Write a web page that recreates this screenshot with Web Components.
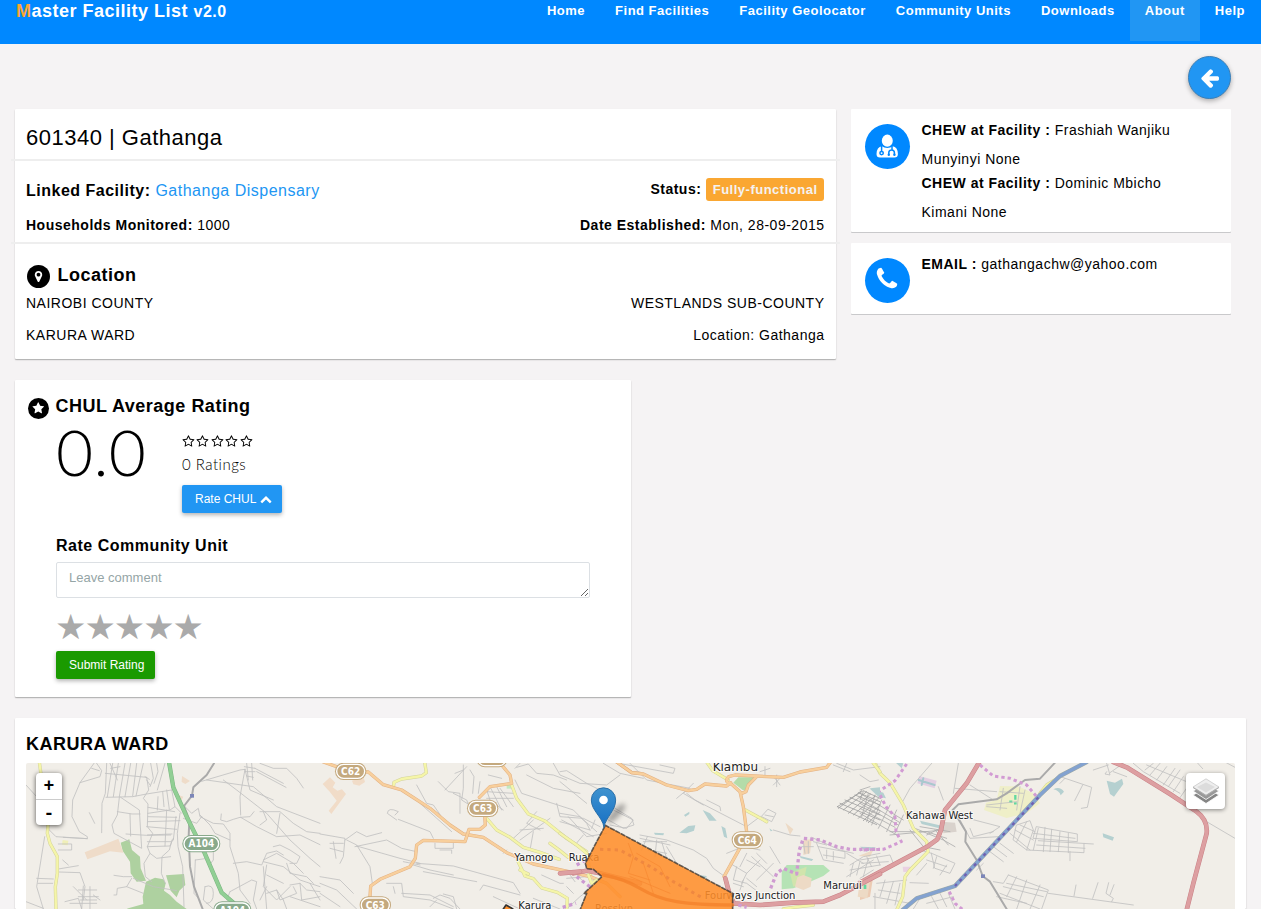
<!DOCTYPE html>
<html lang="en">
<head>
<meta charset="utf-8">
<title>Master Facility List</title>
<style>
html,body{margin:0;height:100%}
body{background:#f5f3f4;font:14px/20px "Liberation Sans",Arial,sans-serif;letter-spacing:.5px;color:#000;overflow:hidden}
</style>
</head>
<body>
<mfl-app></mfl-app>
<script>
const define = (name, html, setup) => customElements.define(name, class extends HTMLElement {
  constructor() {
    super();
    const t = document.createElement('template');
    t.innerHTML = html;
    this.attachShadow({mode: 'open'}).appendChild(t.content.cloneNode(true));
  }
  connectedCallback() { if (setup) setup(this, this.shadowRoot); }
});

const STAR = 'M1728 647q0 22-26 48l-363 354 86 500q1 7 1 20 0 50-41 50-19 0-40-12l-449-236-449 236q-22 12-40 12-21 0-31.5-14.5t-10.5-35.5q0-6 2-20l86-500-364-354q-25-27-25-48 0-37 56-46l502-73 225-455q19-41 49-41t49 41l225 455 502 73q56 9 56 46z';
const ICONS = {
  back: 'M1664 896v128q0 53-32.5 90.5t-84.5 37.5h-704l293 294q38 36 38 90t-38 90l-75 76q-37 37-90 37-52 0-91-37l-651-652q-37-37-37-90 0-52 37-91l651-650q38-38 91-38 52 0 90 38l75 74q38 38 38 91t-38 91l-293 293h704q52 0 84.5 37.5t32.5 90.5z',
  phone: 'M1600 1240q0 27-10 70.5t-21 68.5q-21 50-122 106-94 51-186 51-27 0-52.5-3.5t-57.5-12.5-47.5-14.5-55.5-20.5-49-18q-98-35-175-83-128-79-264.5-215.5t-215.5-264.5q-48-77-83-175-3-9-18-49t-20.5-55.5-14.5-47.5-12.5-57.5-3.5-52.5q0-92 51-186 56-101 106-122 25-11 68.5-21t70.5-10q14 0 21 3 18 6 53 76 11 19 30 54t35 63.5 31 53.5q3 4 17.5 25t21.5 35.5 7 28.5q0 20-28.5 50t-62 55-62 53-28.5 46q0 9 5 22.5t8.5 20.5 14 24 11.5 19q76 137 174 235t235 174q2 1 19 11.5t24 14 20.5 8.5 22.5 5q18 0 46-28.5t53-62 55-62 50-28.5q14 0 28.5 7t35.5 21.5 25 17.5q25 15 53.5 31t63.5 35 54 30q70 35 76 53 3 7 3 21z',
  up: 'M1683 1331l-166 165q-19 19-45 19t-45-19l-531-531-531 531q-19 19-45 19t-45-19l-166-165q-19-19-19-45.5t19-45.5l742-741q19-19 45-19t45 19l742 741q19 19 19 45.5t-19 45.5z',
  star: STAR,
  'star-o': 'M1201 1004l306-297-422-62-189-382-189 382-422 62 306 297-73 421 378-199 377 199zm527-357q0 22-26 48l-363 354 86 500q1 7 1 20 0 50-41 50-19 0-40-12l-449-236-449 236q-22 12-40 12-21 0-31.5-14.5t-10.5-35.5q0-6 2-20l86-500-364-354q-25-27-25-48 0-37 56-46l502-73 225-455q19-41 49-41t49 41l225 455 502 73q56 9 56 46z',
  marker: 'M1152 640q0-106-75-181t-181-75-181 75-75 181 75 181 181 75 181-75 75-181zm256 0q0 109-33 179l-364 774q-16 33-47.5 52t-67.5 19-67.5-19-46.5-52l-365-774q-33-70-33-179 0-212 150-362t362-150 362 150 150 362z'
};
define('mfl-icon', `<style>:host{display:inline-block;width:1em;height:1em;line-height:0}svg{width:100%;height:100%;fill:currentColor;overflow:visible}</style><svg viewBox="0 0 1792 1792"></svg>`, (el, root) => {
  const svg = root.querySelector('svg'), n = el.getAttribute('name');
  if (n === 'doctor') {
    svg.setAttribute('viewBox', '-1 -1 26 26');
    svg.innerHTML = '<ellipse cx="12.300" cy="6.700" rx="5.500" ry="6.100"/><path d="M7 12.200Q1.700 12.800 1.500 20 1.500 23.600 5 23.600H19.400Q22.900 23.600 22.900 20 22.700 12.800 17.600 12.200 15.600 14 12.300 14 9 14 7 12.200Z"/><g fill="none" stroke="#08f" stroke-width="1.500"><path d="M6.600 11.800V17.400M13.800 20.800V18.800Q13.800 16 16.600 16 19.400 16 19.400 18.800V20.800M17 16V12"/><circle cx="6.600" cy="19.100" r="1.700"/></g><g fill="#08f"><circle cx="13.800" cy="20.700" r="1.200"/><circle cx="19.400" cy="20.700" r="1.200"/></g>';
  } else svg.innerHTML = `<path d="${ICONS[n]}"/>`;
});

define('mfl-disc', `<style>:host{display:flex;align-items:center;justify-content:center;flex:none;border-radius:50%;box-sizing:border-box;color:#fff;background:var(--disc,#000);width:var(--size);height:var(--size);font-size:var(--glyph)}</style><slot></slot>`);

define('mfl-nav-item', `<style>:host{display:block;padding:0 15px;height:41px;line-height:22px;font-weight:700;font-size:13px;color:#fff;box-sizing:border-box;white-space:nowrap}:host([active]){background:#2196f3}</style><slot></slot>`);

define('mfl-header', `<style>:host{display:flex;justify-content:space-between;height:44px;background:#08f;color:#fff}
.brand{font-size:18px;font-weight:700;line-height:22px;padding-left:16px}.brand span{color:#faa732}small{font-size:16px}nav{display:flex;padding-right:1px}</style>
<div class="brand"><span>M</span>aster Facility List <small>v2.0</small></div><nav><slot></slot></nav>`);

define('mfl-card', `<style>:host{display:block;background:#fff;box-sizing:border-box;box-shadow:0 1px 1px rgba(0,0,0,.2),0 1px 2px rgba(0,0,0,.12);border-radius:1px}:host([flat]){box-shadow:0 1px 0 #c9c9cb}</style><slot></slot>`);

define('mfl-unit', `<style>
:host{display:block}
mfl-card{height:250px;padding:0 11px;overflow:visible}
h1{margin:0;height:50px;font-size:22px;font-weight:400;line-height:57px}
hr{border:0;height:2px;margin:0 -15px;background:#eee}
.row{display:flex;justify-content:space-between;padding-right:.5px}
a{color:#2196f3}
.main{height:58px;line-height:56px;font-size:14px;padding-right:1px}.main>div:first-child{font-size:16px;line-height:60px}
.tag{display:inline-block;background:#faa732;color:#f4f2f2;font-weight:700;font-size:13px;line-height:23px;height:23px;padding:0 6.5px 0 7px;border-radius:3px}
.sub{height:23px;line-height:12px}
h2{display:flex;margin:0;height:43px;font-size:18px;line-height:20px;box-sizing:border-box;padding:21px 0 0 1px;gap:7.500px}
mfl-disc{--size:23px;--glyph:13px}
.loc{height:32px;line-height:32px}
</style>
<mfl-card><h1>601340 | Gathanga</h1><hr>
<div class="row main"><div><b>Linked Facility:</b> <a>Gathanga Dispensary</a></div><div><b>Status:</b> <span class="tag">Fully-functional</span></div></div>
<div class="row sub"><div><b>Households Monitored:</b> 1000</div><div><b>Date Established:</b> Mon, 28-09-2015</div></div><hr>
<h2><mfl-disc><mfl-icon name="marker"></mfl-icon></mfl-disc><span>Location</span></h2>
<div class="row loc"><div>NAIROBI COUNTY</div><div>WESTLANDS SUB-COUNTY</div></div>
<div class="row loc"><div>KARURA WARD</div><div>Location: Gathanga</div></div>
</mfl-card>`);

define('mfl-contact', `<style>
:host{display:block}
mfl-card{display:flex;padding:7px 14px 10px;gap:11.5px;min-height:71px}
mfl-disc{--disc:#08f;--size:45px;--glyph:26px;margin-top:8px;padding:0 1px 2px 0}
.lines{line-height:29px}
::slotted(div){margin-bottom:-5px}
</style><mfl-card flat><mfl-disc><mfl-icon></mfl-icon></mfl-disc><div class="lines"><slot></slot></div></mfl-card>`, (el, r) => {
  const i = document.createElement('mfl-icon'); i.setAttribute('name', el.getAttribute('icon'));
  r.querySelector('mfl-icon').replaceWith(i);
});

define('mfl-button', `<style>:host{display:inline-flex;align-items:center;box-sizing:border-box;height:28px;padding:0 10px 0 13px;border-radius:2px;background:var(--bg,#2196f3);color:#fff;font-size:12px;letter-spacing:0;gap:4px;box-shadow:0 2px 4px rgba(0,0,0,.3)}</style><slot></slot>`);

define('mfl-rating', `<style>
:host{display:block;width:616px}
mfl-card{height:317px;padding:0 41px 0 12.5px}
h2{display:flex;margin:0;padding-top:16px;gap:7px;font-size:18px;line-height:20px}
mfl-disc{--size:21px;--glyph:12.500px;margin-top:1.5px}
.body{padding-left:28.5px}
.score{display:flex;height:111px}
.num{width:126px;font:300 64px/66px Lato,sans-serif;letter-spacing:.3px}
.stars{display:flex;gap:1.500px;font-size:12.900px;padding-top:16px;height:13px}
.count{font:300 15px/20px Lato,sans-serif;letter-spacing:.5px;padding:6px 0 11px}
h3{margin:0;font-size:16px;line-height:20px;padding-top:6px}
textarea{display:block;box-sizing:border-box;width:534px;height:36px;margin:6px 0 0;padding:5px 12px;border:1px solid #dce0e4;border-radius:2px;font:13px/20px "Liberation Sans",sans-serif;resize:both}
textarea::placeholder{color:#95a5a6}
.big{font:35px/40px "DejaVu Sans",sans-serif;letter-spacing:-2px;color:#aaa;height:40px;margin:9px 0 4px -1px}
mfl-button.go{--bg:#1a9a00;padding-right:10.500px}
</style>
<mfl-card><h2><mfl-disc><mfl-icon name="star"></mfl-icon></mfl-disc><span>CHUL Average Rating</span></h2>
<div class="body"><div class="score"><div class="num">0.0</div><div><div class="stars"><mfl-icon name="star-o"></mfl-icon><mfl-icon name="star-o"></mfl-icon><mfl-icon name="star-o"></mfl-icon><mfl-icon name="star-o"></mfl-icon><mfl-icon name="star-o"></mfl-icon></div><div class="count">0 Ratings</div><mfl-button>Rate CHUL <mfl-icon name="up"></mfl-icon></mfl-button></div></div>
<h3>Rate Community Unit</h3><textarea placeholder="Leave comment"></textarea>
<div class="big">★★★★★</div><mfl-button class="go">Submit Rating</mfl-button></div></mfl-card>`);

const shield = (x, y, w, t, c) => `<g><rect x="${x - w / 2}" y="${y - 26}" width="${w}" height="52" rx="26" fill="${c}"/><rect x="${x - w / 2 + 5}" y="${y - 21}" width="${w - 10}" height="42" rx="21" fill="${c}" stroke="#fff" stroke-width="4"/>${t ? `<text x="${x}" y="${y + 11}" text-anchor="middle" font-weight="700" font-stretch="condensed" font-size="30" fill="#fff">${t}</text>` : ''}</g>`;
const label = (x, y, t, s = 30) => `<text x="${x}" y="${y}" font-size="${s}" fill="#222" stroke="#fff" stroke-opacity=".75" stroke-width="6" paint-order="stroke" stroke-linejoin="round">${t}</text>`;
const road = (d, w, edge, fill) => `<path d="${d}" stroke="${edge}" stroke-width="${w}"/><path d="${d}" stroke="${fill}" stroke-width="${w - 3}"/>`;
const orange = d => road(d, 10, '#e2b184', '#f8cf9c');
const yellow = d => road(d, 10, '#d3d39c', '#f5f5a8');
const red = d => road(d, 14, '#c98287', '#dd9fa1');

define('mfl-map', `<style>
:host{display:grid;height:146px;background:#f1eee8;overflow:hidden;border-radius:2px 2px 0 0}
svg.base,.controls{grid-area:1/1}
svg.base{width:1209px;height:146px;display:block;font-family:"DejaVu Sans",sans-serif;letter-spacing:0}
.controls{display:flex;justify-content:space-between;align-items:flex-start;padding:9px 10px 0 10px;z-index:1}
.zoom,.layers{background:#fff;border-radius:4px;box-shadow:0 1px 5px rgba(0,0,0,.65)}
.zoom{width:26px;margin-top:1px}.zoom div{box-sizing:border-box;height:26px;text-align:center;font:700 18px/26px "Liberation Mono",monospace;letter-spacing:0}
.zoom div+div{border-top:1px solid #ccc;line-height:28px}
.layers{width:39px;height:36px;margin-top:1px;display:flex;align-items:center;justify-content:center;box-shadow:0 1px 4px rgba(0,0,0,.45)}
</style>
<svg class="base" viewBox="26 763 1209 146"><g fill="none" stroke-linejoin="round" stroke-linecap="round">
<g transform="translate(0 700) scale(.33333)">
 <g fill="#aed1a0"><path d="M362 428L388 418 396 450 420 470 422 505 438 542 410 545 392 520 390 485 368 452Z"/><path d="M438 545L465 533 490 538 497 550 492 572 510 585 530 605 560 627H380L385 625 430 612 428 590Z"/><path d="M498 526L552 522 556 555 538 572 530 592 512 572Z"/></g>
 <g fill="#efdcc9"><path d="M254 457L355 416 370 458 330 454 262 478Z"/><path d="M546 228L570 243 556 252 545 246ZM535 285L550 290 545 300 533 296Z"/></g>
 <path d="M188 420L205 422 203 436 186 434Z" fill="#f0efb8"/>
 <g stroke="#c1c1c0" stroke-width="2.5">
 <path d="M282 190L240 248 218 300 216 350 238 395 262 410 262 416 190 412M240 248L300 230 305 212 290 190M275 205L298 212M320 190L316 280 306 310 305 398M318 292L398 290 440 282 515 270M338 190L322 290M355 190L340 290M375 190L358 290M392 190L375 290M410 190L398 288M430 190L408 288M316 220L440 232M332 205L360 200M330 190L352 240M268 338L284 370"/>
 <path d="M358 292L352 345 336 375 342 400 425 445 418 330 362 292M352 335L396 342 420 342M390 342L392 408M440 232L446 270 430 295 444 312 442 380 458 400 442 440 450 460 432 490 436 530 455 545M440 240L450 255M435 230L448 238M452 190L460 235 450 260M470 190L474 215 462 250M495 190L472 270M515 270L525 320 510 330 444 340M488 275L492 320M500 270L508 328M474 290L472 330M444 350L530 352M444 365L540 362M440 380L530 388M442 405L516 402M442 425L512 425M442 440L510 438 520 415M525 320L545 340M444 322L524 335M500 330L495 438M528 350L520 420M378 402L440 406 512 405"/>
 <path d="M516 420L508 450 486 470 484 520 496 550M540 340L532 400 534 440 548 500 552 620M450 460L470 475 512 470M550 315L575 340 595 325 600 350 640 370 670 372 690 400 690 440 715 520 720 570 750 610M600 345L630 375 645 400 690 420M550 355L590 370 605 350M640 420L640 480 625 500M586 480L582 580 600 600M586 480L615 476M615 560L610 600 640 627M690 575L755 540 770 545 760 600 770 627M615 560Q640 550 640 580T620 610M690 575L680 600 720 610"/>
 <path d="M605 244L720 210 735 208M620 240L690 250 760 260 830 320 960 370M670 240L710 270 800 340 870 420 930 475 960 500M735 208L720 290 722 345M664 342L662 360 680 365 700 358 720 352 750 350 762 335M722 352L770 380 830 410 900 405 960 434M740 190L745 240M755 190L758 240M733 200L765 205M735 215L765 215M740 228L760 232M765 205L850 250M780 190L820 205 860 205 890 235 910 264M770 215L858 262M735 208L750 270 820 300"/>
 <path d="M700 490L740 485 785 495 800 460 830 453 850 465M790 480L830 460 880 490 910 520M790 485L850 500 900 540 960 560M800 495L790 560 830 600 870 560M860 490L870 520 920 530 940 550M800 560L780 600M870 555L900 550 920 570 960 575M820 440L840 435 870 450 900 470 890 490 870 490M840 340L830 400M790 335L800 360 780 375M780 335L840 335 880 370 920 395 960 400"/>
 <path d="M78 255L110 290M134 410L114 535 110 560 130 627M110 535L160 537M114 550L158 550M146 388L168 410 262 416M175 450H215V432H175M175 507L235 497M178 516L240 518 255 560 250 600M188 480L205 495M235 570H290M235 590H295M250 558L245 627M270 560V627M240 600H290M280 585L300 600M78 605L130 625M342 526L370 530 395 530M395 535L380 560 352 565 350 585 342 585M380 560L430 580M400 535L460 560 530 572M195 605L235 595 245 627M210 610H290M220 560L260 600"/>
 <path d="M790 500L800 627M800 525L850 550M830 570L840 600 890 580 880 560M900 550L905 600 960 590M800 580L830 570 850 600M850 600L860 627M870 590L960 620M930 550L960 600"/>
 </g>
 <g stroke="#aaa"><path d="M642 190L620 225 580 262 576 287 552 318 568 360 566 410 570 500 582 560 608 627" stroke-width="6"/></g>
 ${yellow('M118 186L124 230 140 300 146 350 142 400 150 430 172 470 172 520 166 560 168 627')}
 ${road('M507 186L520 262 560 350 612 455 665 578 700 608 720 640', 13, '#7db582', '#91cf94')}
 <rect x="570" y="282" width="12" height="11" fill="#7c86b8"/>
 ${shield(604, 431, 114, 'A104', '#88a98b')}${shield(697, 630, 114, 'A104', '#88a98b')}
</g>
<g transform="translate(320 750) scale(.33333)">
 <g fill="#f1dcc8"><path d="M8 102L30 82 46 98 38 112 52 122 66 118 78 132 34 192 26 182 50 152 28 124 22 118Z"/><path d="M96 92L130 80 135 96 118 107 100 103Z"/></g><rect x="560" y="104" width="20" height="12" fill="#c3e9c0"/>
 <g stroke="#c1c1c0" stroke-width="2.5">
 <path d="M230 210L202 190Q204 170 235 185L225 195M235 208L330 245 340 265M0 252L75 265 70 320 60 340M30 280H70M30 295L68 305M40 275L48 325M75 270L110 245 140 260 185 248M80 270L110 285 150 350 157 400M105 290L200 270 245 295 290 305M110 288L240 325 300 340M290 340L400 348 580 398 600 430M290 105L320 160 340 165 375 215M300 160L395 245M375 120L440 50M355 95L385 125 420 130 420 190M430 45V115L425 150 465 175M405 70L430 60M450 60L462 80 458 130M400 130L440 150 460 200M480 95L475 130M510 110L545 180M530 110L560 170M500 125L580 130M500 145L580 145M500 120L510 150 550 180M540 115L580 170M505 75L545 85M585 55L600 40M590 52L625 42 650 70 700 75 740 90M700 40L720 75 780 100 860 105 900 75M585 90L605 130 760 180 800 220 810 240M620 75L700 115 780 130M640 210L580 265M690 205L600 270M640 245L630 300M650 185L620 220 660 240M600 240L670 235M710 160L720 200 790 205 840 230M725 210L820 260M745 200L800 260 860 250M825 210L815 235M765 285L790 255M860 170L940 210 920 235 870 225M560 300L550 310M345 280V295H400V280M360 300H395V310"/>
 <path d="M0 380L60 390 100 430M0 400L50 420 110 477M0 430L60 470M200 400H245L250 440 330 450 400 477M220 410L225 430M245 430L330 435 400 470M340 445L360 435 390 445 420 477M370 432L400 440 410 477M330 470L350 450M250 335L300 345M280 345L330 360 400 375M310 365L470 395M480 420L490 405 600 435M520 440L600 477M640 445L720 477M740 385L800 380M750 375L765 395M770 370L785 390M665 375L720 400 730 400M760 430L740 410M820 410L780 440 740 477"/>
 </g>
 ${yellow('M314 36L319 68 305 78 245 87 222 97 220 112')}
 ${yellow('M575 105L590 145 625 192 675 213 740 265 800 305 812 378')}
 ${yellow('M500 205L530 240 570 262 610 292 660 307 718 328')}
 ${yellow('M690 280L715 298 745 322M592 330L615 378 640 386 665 414 712 427 742 445 740 480M600 360L625 372')}
 ${orange('M10 36L90 64 145 66 190 104 245 120 330 175 390 225 430 252 490 262 560 308 640 342 760 368 810 380 860 400 900 440')}
 ${orange('M150 440L152 408 180 388 270 350 286 325 290 285 310 271 435 275 447 238 480 238 496 225 494 196M478 142L510 110 575 100 570 75 545 45')}
 ${orange('M890 36L935 68 960 70')}
 ${red('M760 370L800 362 840 370 960 400')}
 <g stroke="#cc99d2" stroke-width="10" stroke-dasharray="10 10" stroke-linecap="butt"><path d="M770 345L805 325M770 380L812 412M728 472L768 460"/></g>
 ${shield(92, 64, 94, 'C62', '#c4a97e')}${shield(488, 175, 94, 'C63', '#c4a97e')}${shield(166, 465, 94, 'C63', '#c4a97e')}${shield(516, 26, 94, '', '#c4a97e')}
 ${label(583, 334, 'Yamogo')}${label(746, 334, 'Ruaka')}${label(595, 478, 'Karura')}
</g>
<g transform="translate(860 750) scale(.33333)">
 <g fill="#b5d0d0"><path d="M740 92L765 98 786 86 790 102 762 140 750 132ZM728 250L762 262 758 272 730 262ZM580 118Q600 108 612 125L602 136Q598 122 580 118ZM28 115L70 128 78 145 55 140ZM105 36L130 40 125 55ZM0 290L48 292 20 305ZM180 212L265 232 260 240 185 222Z"/></g>
 <g fill="#eccbb3"><path d="M0 393L38 390 30 440 0 450Z"/></g><path d="M178 78L230 92 224 115 172 100Z" fill="#e3cfe2"/><path d="M176 90L224 105M190 85L185 105" stroke="#a9c8ce" stroke-width="6"/><path d="M420 108L478 110 520 130 540 160 500 190 440 204 372 180 378 158 410 150Z" fill="#efefc8"/><path d="M128 350H152V365L130 366Z" fill="#ead1e2"/><path d="M245 215L285 218 290 245 250 250Z" fill="#d9d2cc"/><path d="M466 135V149M448 155H457M462 160H470" stroke="#62d8a0" stroke-width="7" stroke-linecap="butt"/><circle cx="14" cy="410" r="6" fill="#62d8a0"/>
 <g stroke="#c1c1c0" stroke-width="2.5">
 <path d="M0 75L30 95 55 90M215 40L150 115 125 160M295 40L280 130M235 110L250 150M330 105L400 150M285 115L410 125M290 190L330 265 415 260M305 200L420 230 390 250M330 235L340 260 400 245M380 165L470 155M380 170L440 175M420 125L490 130M430 115L420 180M480 110L470 180M495 120L480 190"/>
 <path d="M0 130L130 210M0 145L120 218M0 160L115 225M0 175L105 232M10 125L0 150M25 130L5 200M45 135L20 215M65 150L35 225M90 165L55 235M110 180L80 245M130 195L105 250M0 120L30 110M0 190L110 255M90 245H200L260 265M90 255L250 240M150 240L190 290 240 300M165 235L250 270 285 290M180 230L270 245M200 255L240 235M225 240L265 285" stroke="#adadad"/>
 <path d="M470 225L510 212 520 240 500 300 460 270ZM465 240L520 270M480 225L525 245M500 215L470 275M530 230L652 252V275L520 265ZM520 250L645 265M535 235L520 300M555 232L550 305M575 238L570 305M600 245L595 305M625 250V308M535 272L700 282M530 285L675 295M500 300L672 308V282M630 305V332M400 290L440 320M390 305L430 335M420 280L460 310M450 250L510 300"/>
 <path d="M215 310L285 340 270 370 225 355ZM200 330L260 350M180 300L215 310M230 320L220 355M170 375L200 340M150 398L205 400M260 345L240 375M370 340L350 360"/>
 <path d="M445 375L565 420 545 477M445 375L430 400 400 395M470 380L440 440M500 390L470 477M540 405L510 477M430 410L550 440M420 430L540 477M440 400L560 425M410 440L500 460M565 430L820 465M648 405L642 438M714 398L698 445M746 398L738 430 760 445 755 455M762 404L750 435M595 78L695 112 682 172 664 175M668 105L644 152M615 85L600 100"/>
 <path d="M700 60L745 45M740 40L750 75 735 72 740 65M750 68L790 40M760 65L800 80M820 40L850 65 960 130M855 60L880 40M870 75L900 40M890 90L920 50M910 105L945 55M925 110L960 60M940 125L970 80M860 45L980 95M955 150L990 100M1010 36L1028 56M1095 36L1125 52M1040 215L1125 265"/>
 <path d="M0 330L90 315 100 340M20 320L35 350M50 318L60 345M5 340L85 335M50 400L140 390M55 420L120 430M40 440L150 460M75 390L60 440M100 395L80 460M120 400L105 465M45 430V477M160 477L180 445M200 460L280 440M215 440L235 477M240 430L260 470M265 430L285 477"/>
 </g>
 <path d="M585 38L540 86 495 90 440 130 410 148 295 163 278 180 300 215 318 245 316 275 350 330 368 378 390 395 440 477" stroke="#aaa" stroke-width="6"/>
 ${yellow('M44 36L60 70 90 98 130 165 160 235 200 275 204 305 150 360 135 380 128 440 110 480')}
 ${red('M358 36L320 100 255 180 243 240 232 268 205 288 0 398')}
 ${red('M760 36L800 52 930 132 1010 185Q1044 210 1040 250L1000 400 980 480')}
 ${yellow('M600 80L560 105 540 130')}
 ${road('M680 36L600 78 540 135 285 408 170 445 128 480', 13, '#9eaaa5', '#83a2d0')}
 <g stroke="#7060b0" stroke-width="7" stroke-dasharray="9 12" stroke-linecap="butt"><path d="M535 142L285 408"/></g>
 <g stroke="#d29bd3" stroke-width="9" stroke-dasharray="10 9" stroke-linecap="butt"><path d="M360 45L400 78 450 85 500 105 530 140M140 42L105 92 55 125 78 170 105 200 108 245 124 275 70 298 0 300M268 425L285 460 310 480"/></g>
 <rect x="363" y="373" width="12" height="11" fill="#7c86b8"/>
 ${label(138, 208, 'Kahawa West')}
</g>
<g transform="translate(560 750) scale(.33333)">
 <g fill="#b5d0d0"><path d="M428 180L450 190 470 212 448 212ZM358 248L385 228 406 226 402 242 380 250ZM484 228L496 235 502 265 492 260ZM282 248L312 250 310 256 285 254ZM372 195L388 185V192L376 200ZM628 235L638 242 632 244ZM720 318L760 328 755 333 722 324ZM415 375L440 378 438 386 418 383ZM930 115L960 112V135Z"/></g>
 <path d="M520 98L535 82H585L555 122 545 118Z" fill="#b4dca9"/>
 <path d="M665 365L680 345 790 345 810 362 790 378 740 400 700 415 665 418Z" fill="#b5e3b5"/><path d="M690 370L740 350 730 400 700 410Z" fill="#d1e4ac"/>
 <g fill="#eddac5"><path d="M676 218L700 238 690 254ZM730 270L755 268 750 310 730 315ZM712 382L730 375 755 385 752 410 730 420 705 410ZM895 318L940 300 930 320ZM900 390L930 392 922 445 893 440Z"/></g><rect x="911" y="404" width="8" height="13" fill="#62d8a0"/>
 <g stroke="#c1c1c0" stroke-width="2.5">
 <path d="M0 65L20 62 80 100 120 120M0 95L80 160M130 40L180 70 250 85M175 40L340 70 345 55 300 45M210 40L260 90 390 115M400 100L370 130 430 165M380 130L405 150 560 230M440 150L480 170 482 182M0 190L60 200 110 245M0 215L90 240M140 160L215 205 222 225 190 235 145 210M240 255L320 270 400 300 440 325 460 355 492 378M240 265L330 285M250 275H320M262 260L245 300M290 270L285 320M305 275L320 325M320 290L350 340M265 300L320 310M500 310L550 290 600 300M560 310L540 350M575 320L640 380M590 310L620 340M600 330L560 370 545 400M510 340L560 370M530 350L520 390 560 400 600 430M630 290L660 340M560 330L600 350M625 178L648 190 635 215 605 200ZM615 195L640 200M560 230L600 200M640 240L690 255 720 258M640 340L590 390M560 385L590 410M520 400L550 410M550 390L540 420"/>
 <path d="M600 65L630 55M615 80V50M640 105L660 85M645 85L660 105M650 75V110M820 45L870 65M830 40L880 60 960 50M860 40L850 65M380 120L350 145"/>
 <path d="M832 170L910 122 960 145M832 170L950 224M840 160L960 210M855 150L960 195M870 142L960 182M885 135L960 165M895 128L960 155M835 175L905 122M850 180L920 125M865 190L932 132M880 195L945 138M895 205L955 145M910 212L960 165M925 218L960 185" stroke="#a0a0a0"/>
 <path d="M755 262L840 300 880 310M770 280L790 330 850 340M775 290L855 305V325L790 315M800 300V325M820 305V330M760 275L800 285M860 310L910 340M870 345L910 320 960 310M870 360L960 345M860 380L940 330M880 340L870 380M900 335L890 375M925 325L910 380M940 360L900 385M730 275L735 310M745 275V310M725 290H760"/>
 </g>
 ${yellow('M440 36L458 62 505 90M556 180L620 215M670 477L700 472 760 465M85 375L95 400 110 390M0 250L50 285 80 310M940 40L960 65')}
 ${orange('M165 32L215 68 250 72 320 105 385 122 410 118 435 102 500 108 512 98M560 245L550 170 540 125 515 103Q490 96 506 80L525 75 670 82 720 66 800 52 812 36M545 130L558 125 565 105 590 80M542 290L492 380')}
 ${red('M496 385L508 430 520 456M0 370L60 365M520 460L600 465 700 458 790 455 840 435 960 372')}
 <g stroke="#cf9bd1" stroke-width="10" stroke-dasharray="10 9" stroke-linecap="butt"><path d="M632 415L650 370 670 355 710 372 718 300 730 265 780 270 830 290 870 298 960 298M535 465L560 472"/></g>
 ${label(434, 446, 'Fourways Junction')}${label(790, 417, 'Marurui')}${label(458, 62, 'Kiambu', 36)}
 ${shield(562, 270, 94, 'C64', '#c4a97e')}
 ${label(105, 486, 'Rosslyn')}
 <path d="M136 226L518 430V480H60L80 430 72 430 126 380 100 358 80 356 76 340Z" fill="#ff8f2a" fill-opacity=".87" stroke="#333" stroke-opacity=".75" stroke-width="5" stroke-dasharray="12 6"/>
 <g stroke="#f37f28" opacity=".7"><path d="M130 375Q190 385 240 415T350 455 518 465" stroke-width="10"/><path d="M120 298L180 300 280 355 340 395 430 445" stroke="#e9803f" stroke-width="9" stroke-dasharray="10 12" stroke-linecap="butt"/><path d="M205 280L220 320 205 370 270 390M230 310L300 350 330 410M250 340L280 430M210 380L330 430" stroke-width="2"/></g>
 <ellipse cx="168" cy="190" rx="38" ry="12" transform="rotate(-46 168 190)" fill="#333" opacity=".4" style="filter:blur(8px)"/>
 <linearGradient id="pin" x1="0" y1="0" x2="0" y2="1"><stop stop-color="#3f93cf"/><stop offset="1" stop-color="#1870c4"/></linearGradient>
 <path d="M132 231C127 200 94 182 94 150A36 36 0 0 1 167 150C167 182 138 200 132 231Z" fill="url(#pin)" stroke="#2b6fa8" stroke-width="3"/><circle cx="130.500" cy="150" r="13" fill="#fff"/>
</g>
<g transform="translate(320 750) scale(.33333)"><path d="M548 480L558 465 574 474 582 480Z" fill="#ff8f2a" stroke="#333" stroke-width="5"/></g>
</g></svg>
<div class="controls"><div class="zoom"><div>+</div><div>-</div></div>
<div class="layers"><svg width="26" height="26" viewBox="0 0 26 26"><g stroke="#fff" stroke-width=".8"><path d="M0 17L13 10 26 17 13 25.500Z" fill="#858585"/><path d="M0 13L13 6 26 13 13 21.500Z" fill="#999"/></g><path d="M0 9L13 .8 26 9 13 17.200Z" fill="#eee" stroke="#bbb" stroke-width=".6"/><path d="M4 9L13 4.500 22 9 13 14.500Z" fill="#dcdcdc"/><path d="M0 9.500L13 17.500 26 9.500" fill="none" stroke="#aaa" stroke-width="1"/></svg></div></div>`);

define('mfl-app', `<style>
:host{display:block;height:909px;overflow:hidden}
.bar{display:flex;justify-content:flex-end;padding:12px 30px 0 0;height:65px;box-sizing:border-box}
.bar mfl-disc{--disc:#2196f3;--size:43px;--glyph:21.500px;border:1px solid #3a7fb8;box-shadow:0 2px 5px rgba(0,0,0,.3)}
.top{display:grid;grid-template-columns:821px 380px;gap:15px;padding-left:15px;align-items:start;height:250px}
aside{display:grid;gap:10.500px}
mfl-rating{margin:21px 0 0 15px}
.map{margin:21px 15px 0 15px;padding:0 11px}
h2{margin:0;font-size:18px;line-height:20px;padding:16px 0 9px}
</style>
<mfl-header><mfl-nav-item>Home</mfl-nav-item><mfl-nav-item>Find Facilities</mfl-nav-item><mfl-nav-item>Facility Geolocator</mfl-nav-item><mfl-nav-item>Community Units</mfl-nav-item><mfl-nav-item>Downloads</mfl-nav-item><mfl-nav-item active>About</mfl-nav-item><mfl-nav-item>Help</mfl-nav-item></mfl-header>
<div class="bar"><mfl-disc><mfl-icon name="back"></mfl-icon></mfl-disc></div>
<div class="top"><mfl-unit></mfl-unit><aside>
<mfl-contact icon="doctor"><div><b>CHEW at Facility :</b> Frashiah Wanjiku<br>Munyinyi None</div><div><b>CHEW at Facility :</b> Dominic Mbicho<br>Kimani None</div></mfl-contact>
<mfl-contact icon="phone"><div><b>EMAIL :</b> gathangachw@yahoo.com</div></mfl-contact></aside></div>
<mfl-rating></mfl-rating>
<mfl-card class="map"><h2>KARURA WARD</h2><mfl-map></mfl-map></mfl-card>`);
</script>
</body>
</html>
